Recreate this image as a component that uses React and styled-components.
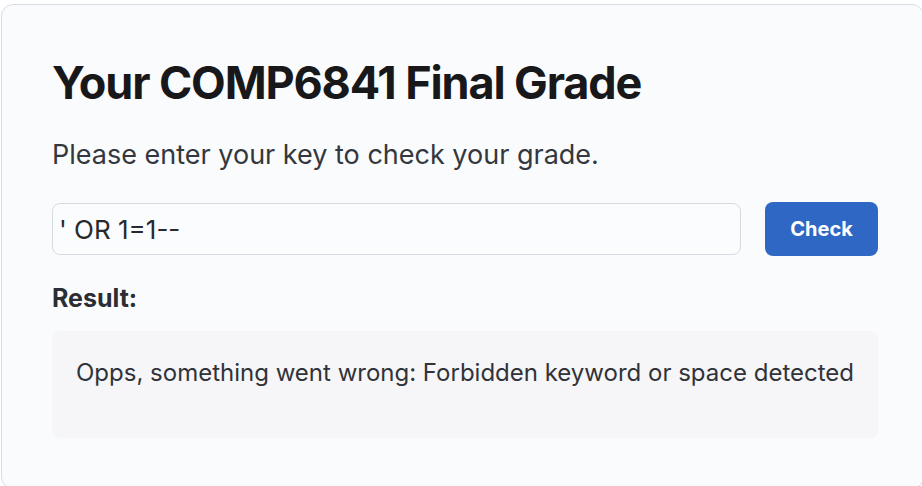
import React from "react";
import styled, { createGlobalStyle } from "styled-components";

const GlobalStyle = createGlobalStyle`
  html, body {
    margin: 0;
    padding: 0;
    background: #ffffff;
    overflow: hidden;
  }
  body {
    font-family: Inter, "Noto Sans", "Liberation Sans", sans-serif;
  }
`;

const Card = styled.div`
  box-sizing: border-box;
  margin: 4px 0 0 1px;
  width: 923px;
  height: 485px;
  padding: 50px 45px 0 50px;
  background: #fafbfd;
  border: 1px solid #d9dee6;
  border-radius: 12px;
  display: flex;
  flex-direction: column;
`;

const Title = styled.h1`
  margin: 0;
  font-size: 45px;
  line-height: 55px;
  font-weight: 700;
  letter-spacing: -0.025em;
  color: #18181b;
`;

const Lead = styled.p`
  margin: 25px 0 0;
  font-size: 27px;
  line-height: 40px;
  color: #33383e;
`;

const Form = styled.form`
  margin-top: 27px;
  display: flex;
  gap: 24px;
  align-items: flex-start;
`;

const KeyInput = styled.input`
  box-sizing: border-box;
  flex: 1;
  height: 52px;
  margin-top: 1px;
  padding: 0 14px 0 6px;
  font-family: inherit;
  font-size: 26px;
  color: #27292d;
  background: #fbfcfe;
  border: 1px solid #d5dbe3;
  border-radius: 8px;
  outline: none;
`;

const CheckButton = styled.button`
  box-sizing: border-box;
  width: 113px;
  height: 54px;
  font-family: inherit;
  font-size: 20px;
  font-weight: 700;
  color: #ffffff;
  background: #2f68c4;
  border: none;
  border-radius: 8px;
`;

const Label = styled.h2`
  margin: 24px 0 0;
  font-size: 25px;
  line-height: 36px;
  font-weight: 700;
  color: #2b2e33;
`;

const ResultBox = styled.div`
  box-sizing: border-box;
  margin-top: 15px;
  min-height: 107px;
  padding: 24px 20px 24px 24px;
  background: #f6f6f8;
  border-radius: 8px;
  font-size: 24px;
  line-height: 36px;
  white-space: nowrap;
  color: #303339;
`;

export default function App() {
  return (
    <>
      <GlobalStyle />
      <Card>
        <Title>Your COMP6841 Final Grade</Title>
        <Lead>Please enter your key to check your grade.</Lead>
        <Form onSubmit={(e) => e.preventDefault()}>
          <KeyInput defaultValue="' OR 1=1--" />
          <CheckButton type="submit">Check</CheckButton>
        </Form>
        <Label>Result:</Label>
        <ResultBox>
          Opps, something went wrong: Forbidden keyword or space detected
        </ResultBox>
      </Card>
    </>
  );
}
